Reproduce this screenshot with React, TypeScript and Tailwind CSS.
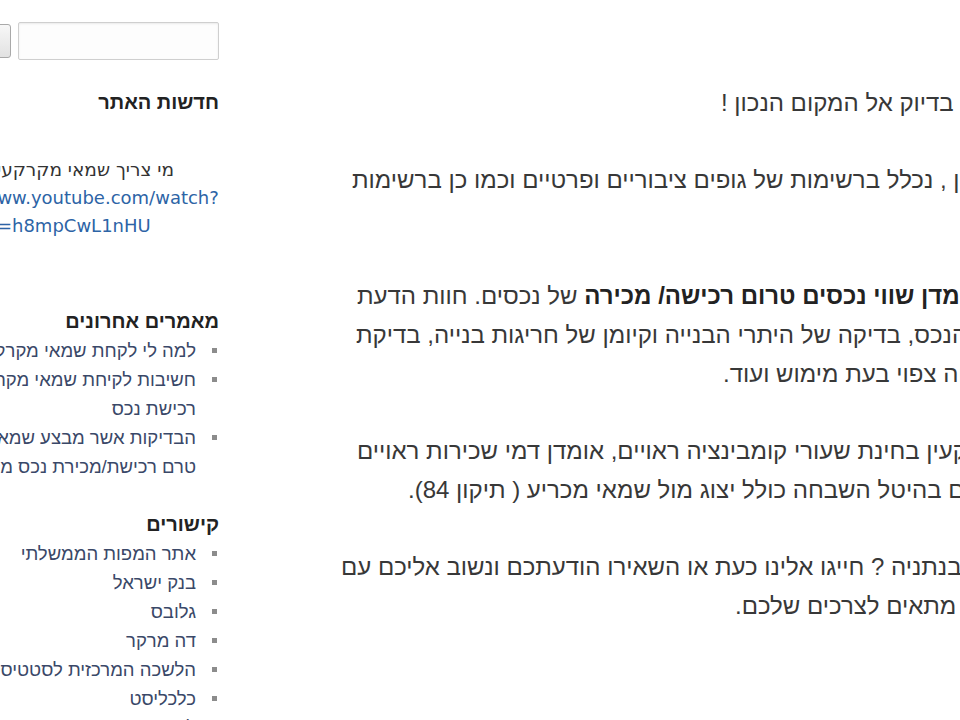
export default function App() {
  return (
    <div className="h-[720px] w-[960px] overflow-hidden bg-white text-[#383838] font-['Liberation_Sans',Arial,sans-serif]">
      <div dir="rtl" className="ml-[-82px] flex w-[1520px] gap-[119px]">
        {/* main article column, right side runs past the window */}
        <main className="w-[1100px] shrink-0 pt-[84px] text-[24px] leading-[38.7px]">
          <p className="mb-[38.7px]">
            <span className="block whitespace-nowrap pl-[383px] text-left">הגעתם בדיוק אל המקום הנכון !</span>
          </p>
          <p className="mb-[38.7px]">
            <span className="block whitespace-nowrap pl-[14px] text-left">
              משרדנו מורכב משמאי מקרקעין , נכלל ברשימות של גופים ציבוריים ופרטיים וכמו כן ברשימות
            </span>
            <span className="block whitespace-nowrap pl-[700px] text-left">השמאים של בתי המשפט.</span>
          </p>
          <p className="mb-[38.7px]">
            <span className="block whitespace-nowrap pl-[19px] text-left">
              משרדנו מבצע <b className="font-bold text-[#222]">אומדן שווי נכסים טרום רכישה/ מכירה</b> של נכסים. חוות הדעת
            </span>
            <span className="block whitespace-nowrap pl-[18px] text-left">
              כוללת בדיקה משפטית של הנכס, בדיקה של היתרי הבנייה וקיומן של חריגות בנייה, בדיקת
            </span>
            <span className="block whitespace-nowrap pl-[385px] text-left">היטל השבחה צפוי בעת מימוש ועוד.</span>
          </p>
          <p className="mb-[38.7px]">
            <span className="block whitespace-nowrap pl-[19px] text-left">
              ייעוץ בתחום המקרקעין בחינת שעורי קומבינציה ראויים, אומדן דמי שכירות ראויים
            </span>
            <span className="block whitespace-nowrap pl-[70px] text-left">
              וייצוג בעניינים בהיטל השבחה כולל יצוג מול שמאי מכריע ( תיקון 84).
            </span>
          </p>
          <p>
            <span className="block whitespace-nowrap pl-[3px] text-left">
              מחפשים שמאי מקרקעין בנתניה ? חייגו אלינו כעת או השאירו הודעתכם ונשוב אליכם עם
            </span>
            <span className="block whitespace-nowrap pl-[397px] text-left">פתרון מתאים לצרכים שלכם.</span>
          </p>
        </main>

        {/* sidebar, left part runs past the window */}
        <aside className="w-[301px] shrink-0 pt-[22px]">
          <form className="flex items-center gap-[7px]">
            <input
              type="text"
              className="h-[38px] w-[201px] rounded-[2px] border border-[#cfcfcf] bg-[#fdfdfd] shadow-[inset_0_1px_2px_rgba(0,0,0,0.08)]"
            />
            <button
              type="button"
              className="h-[34px] w-[48px] rounded-[3px] border border-[#a9a9a9] bg-gradient-to-b from-[#f7f7f7] to-[#e2e2e2]"
            />
          </form>

          <h3 className="mt-[28px] text-[20px] font-bold leading-[29px] text-[#222]">חדשות האתר</h3>
          <div className="mt-[39px] font-['DejaVu_Sans',Verdana,sans-serif] leading-[28px]">
            <div className="whitespace-nowrap pr-[45px] text-right text-[18.5px] text-[#333]">מי צריך שמאי מקרקעין?</div>
            <a dir="ltr" className="block whitespace-nowrap text-center text-[18px] text-[#2d64a6]">
              https://www.youtube.com/watch?
              <br />
              v=h8mpCwL1nHU
            </a>
          </div>

          <h3 className="mt-[67px] text-[20px] font-bold leading-[29px] text-[#222]">מאמרים אחרונים</h3>
          <ul className="text-[18.5px] leading-[29px] text-[#3a4868]">
            {[
              ["למה לי לקחת שמאי מקרקעין?"],
              ["חשיבות לקיחת שמאי מקרקעין בעת", "רכישת נכס"],
              ["הבדיקות אשר מבצע שמאי מקרקעין", "טרם רכישת/מכירת נכס מקרקעין"],
            ].map((lines) => (
              <li key={lines[0]} className="flex items-start">
                <span className="mt-[12px] mr-[2px] ml-[16px] h-[5px] w-[5px] shrink-0 bg-[#8c8c8c]" />
                <a className="whitespace-nowrap">
                  {lines.map((l) => (
                    <span key={l} className="block">
                      {l}
                    </span>
                  ))}
                </a>
              </li>
            ))}
          </ul>

          <h3 className="mt-[29px] text-[20px] font-bold leading-[29px] text-[#222]">קישורים</h3>
          <ul className="text-[18.5px] leading-[29px] text-[#3a4868]">
            {[
              "אתר המפות הממשלתי",
              "בנק ישראל",
              "גלובס",
              "דה מרקר",
              "הלשכה המרכזית לסטטיסטיקה",
              "כלכליסט",
              "לשכת שמאי המקרקעין",
            ].map((t) => (
              <li key={t} className="flex items-start">
                <span className="mt-[12px] mr-[2px] ml-[16px] h-[5px] w-[5px] shrink-0 bg-[#8c8c8c]" />
                <a className="whitespace-nowrap">{t}</a>
              </li>
            ))}
          </ul>
        </aside>
      </div>
    </div>
  );
}
